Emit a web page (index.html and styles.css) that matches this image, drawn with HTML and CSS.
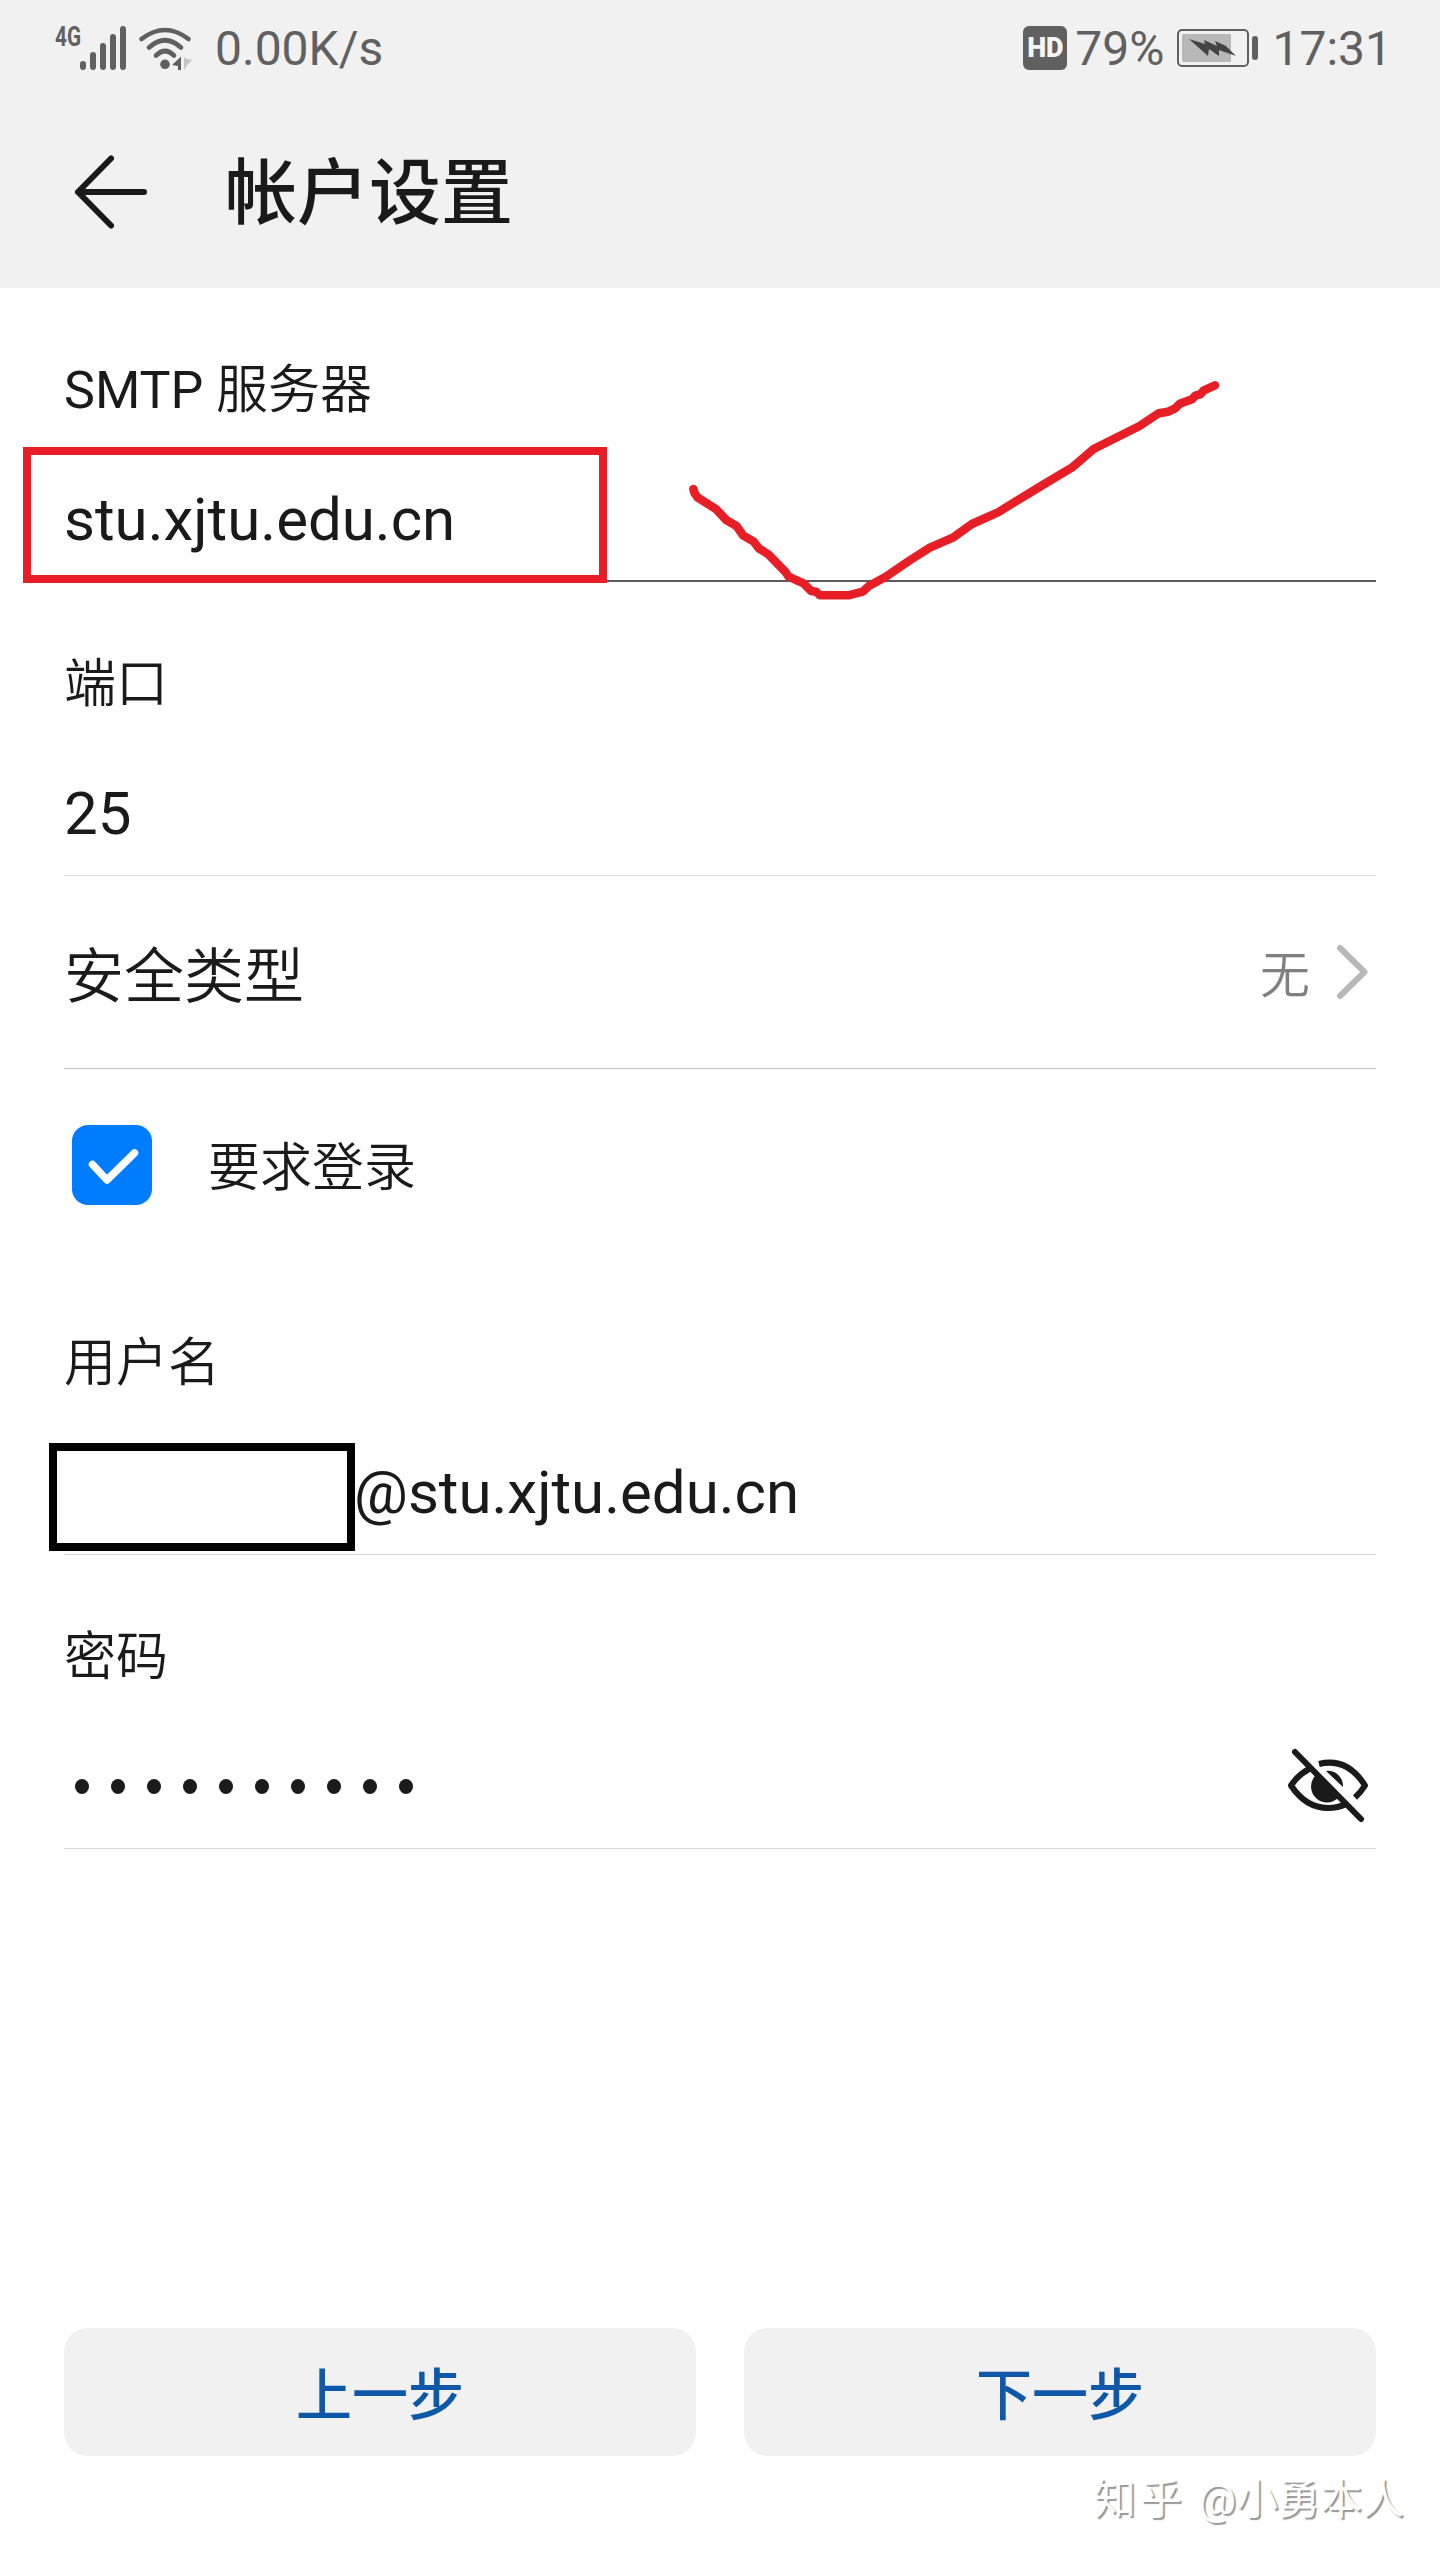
FILE: index.html
```html
<!DOCTYPE html>
<html lang="zh-CN">

<head>
    <meta charset="UTF-8">
    <meta name="viewport" content="width=device-width, initial-scale=1.0">
    <title>帐户设置</title>
    <link rel="stylesheet" href="styles.css">
</head>

<body>
    <div class="screen">
        <header class="header">
            <div class="status-bar">
                <svg class="signal" width="138" height="64" viewBox="0 -8 138 64">
                    <text class="net-type" x="-1" y="21.500" textLength="26" lengthAdjust="spacingAndGlyphs">4G</text>
                    <g fill="#606060">
                        <rect x="24" y="37" width="6" height="9" rx="3" />
                        <rect x="34" y="28" width="6" height="18" rx="3" />
                        <rect x="44" y="19" width="6" height="27" rx="3" />
                        <rect x="54" y="10" width="6" height="36" rx="3" />
                        <rect x="64" y="2" width="6" height="44" rx="3" />
                        <circle cx="109" cy="40.3" r="4.8" />
                        <path d="M116 41l9-8.500v13.500h-3v-4z" />
                    </g>
                    <path d="M128 33v13l3-5 5-5-5-1z" fill="#c4c4c4" />
                    <g fill="none" stroke="#606060" stroke-width="4.600" stroke-linecap="round">
                        <path d="M85.500 15Q109 -3 132.500 15" />
                        <path d="M93 23.500Q109 9 125 23.500" />
                        <path d="M100 31.500Q109 22.500 118 31.500" />
                    </g>
                </svg>
                <span class="speed">0.00K/s</span>
                <span class="hd">HD</span>
                <span class="percent">79%</span>
                <svg class="battery" width="84" height="40" viewBox="0 0 84 40">
                    <rect x="2" y="2" width="70" height="36" rx="4" fill="none" stroke="#606060" stroke-width="2" />
                    <rect x="6" y="6" width="49" height="28" rx="1" fill="#b8b8b8" />
                    <path d="M13 11l16 5-1-4 13 6-2-5 11 5 10 10-17-6 0 6-10-7-1 7z" fill="#444" />
                    <rect x="76" y="8" width="6" height="24" rx="3" fill="#606060" />
                </svg>
                <span class="time">17:31</span>
            </div>
            <div class="title-bar">
                <svg class="back" width="76" height="76" viewBox="0 0 76 76">
                    <path d="M39 4.500L6 38l33 33.500M6 38h66" fill="none" stroke="#1a1a1a" stroke-width="6" stroke-linecap="round" stroke-linejoin="round" />
                </svg>
                <h1>帐户设置</h1>
            </div>
        </header>

        <form class="form">
            <div class="field active">
                <label><span class="latin">SMTP</span> 服务器</label>
                <div class="value">stu.xjtu.edu.cn</div>
                <div class="red-box"></div>
                <svg class="tick" width="560" height="240" viewBox="680 370 560 240">
                    <polyline points="693.3,489 694.5,493 697.5,497.300 716.3,509.300 726.2,520 736.5,526 743,535.300 753.8,541.700 758.7,548.300 768.3,554.300 785.5,572 788.6,576.700 803.5,583.300 811,591 816,591.700 820,595.300 848.3,595.300 862.8,591.700 869.3,585.700 885.8,576.700 908.8,561 929.8,547.700 952.8,537.700 971.9,524 998,512.300 1042.7,485 1071.8,467.700 1093.6,449 1139.5,426 1158.7,413.300 1168.2,411.700 1174.7,408.700 1179.7,403.700 1192,399.300 1195.8,395.300 1200.4,394.300 1203.4,390.700 1215,385.300" fill="none" stroke="#e81e26" stroke-width="8.500" stroke-linecap="round" stroke-linejoin="round" />
                </svg>
            </div>
            <div class="field">
                <label>端口</label>
                <div class="value">25</div>
            </div>
            <div class="select-row">
                <span class="select-label">安全类型</span>
                <span class="select-value">无</span>
                <svg class="chevron" width="32" height="56" viewBox="0 0 32 56">
                    <path d="M4 4l24.500 24L4 52" fill="none" stroke="#b8b8b8" stroke-width="6" stroke-linecap="round" stroke-linejoin="round" />
                </svg>
            </div>
            <div class="check-row">
                <span class="checkbox">
                    <svg width="80" height="80" viewBox="0 0 80 80">
                        <path d="M20.500 39.500L35 55l27.500-27" fill="none" stroke="#fff" stroke-width="7.500" stroke-linecap="round" stroke-linejoin="round" />
                    </svg>
                </span>
                <span class="check-label">要求登录</span>
            </div>
            <div class="field">
                <label>用户名</label>
                <div class="value user">@stu.xjtu.edu.cn</div>
                <div class="black-box"></div>
            </div>
            <div class="field">
                <label>密码</label>
                <div class="value password">
                    <span class="dots"><i></i><i></i><i></i><i></i><i></i><i></i><i></i><i></i><i></i><i></i></span>
                    <svg class="eye" width="84" height="76" viewBox="0 0 84 76">
                        <g fill="none" stroke="#1a1a1a" stroke-width="6">
                            <path d="M23 21Q12 27 5 37.500Q20 60 42 60Q52 60 60 56" stroke-linejoin="round" />
                            <path d="M33 16Q61 9 79 37.500Q75 44 69 49.500" stroke-linejoin="round" />
                            <path d="M9 4l66 67" stroke-linecap="round" />
                        </g>
                        <path d="M29 28A15 15 0 1 0 53 49zM40 23A15 15 0 0 1 57 39z" fill="#1a1a1a" />
                    </svg>
                </div>
            </div>
        </form>

        <div class="buttons">
            <button type="button">上一步</button>
            <button type="button">下一步</button>
        </div>
        <div class="watermark"><span class="site">知乎</span> @小勇本人</div>
    </div>
</body>

</html>
```

FILE: styles.css
```css
* {
    box-sizing: border-box;
}

body {
    margin: 0;
    background-color: #fefefe;
    color: #1a1a1a;
    font-family: Roboto, "Noto Sans CJK SC", sans-serif;
}

.screen {
    display: flex;
    flex-direction: column;
    width: 1440px;
    height: 2560px;
    overflow: hidden;
}

.header {
    height: 288px;
    background-color: #f1f1f1;
}

.status-bar {
    display: flex;
    align-items: center;
    height: 96px;
    padding: 0 48px 0 56px;
    color: #606060;
    font-size: 48px;
    line-height: 66px;
}

.signal {
    overflow: visible;
}

.speed {
    margin-left: 21px;
    margin-right: auto;
}

.speed,
.percent,
.time {
    padding-top: 2px;
}

.net-type {
    fill: #606060;
    font-size: 28px;
    font-weight: 700;
}

.hd {
    width: 44px;
    height: 44px;
    border-radius: 6px;
    background-color: #606060;
    color: #f5f5f5;
    font-size: 27px;
    font-weight: 900;
    line-height: 45px;
    text-align: center;
}

.percent {
    margin-left: 8px;
}

.battery {
    margin-left: 12px;
    margin-right: 12px;
}

.title-bar {
    display: flex;
    align-items: center;
    height: 192px;
    padding-left: 72px;
}

.title-bar h1 {
    margin: 4px 0 0 77px;
    font-size: 72px;
    font-weight: 500;
    line-height: 80px;
}

.form {
    padding: 0 64px;
}

.field {
    position: relative;
    height: 294px;
    padding-top: 73px;
    border-bottom: 1px solid #d9d9d9;
}

.field.active {
    border-bottom: 2px solid #5b5b5b;
}

.field label {
    display: block;
    font-size: 52px;
    font-weight: 350;
    line-height: 60px;
}

.field .latin {
    font-weight: 400;
}

.value {
    margin-top: 69px;
    font-size: 60px;
    line-height: 60px;
}

/* marks drawn over the form */
.red-box {
    position: absolute;
    left: -41px;
    top: 159px;
    width: 584px;
    height: 136px;
    border: 8px solid #e81e26;
}

.tick {
    position: absolute;
    left: 616px;
    top: 82px;
}

.black-box {
    position: absolute;
    left: -15px;
    top: 182px;
    width: 306px;
    height: 108px;
    border: 8px solid #000;
}

.select-row {
    display: flex;
    align-items: center;
    height: 193px;
    padding-right: 8px;
    border-bottom: 1px solid #c4c4c4;
}

.select-label {
    flex: 1;
    padding-top: 12px;
    font-size: 60px;
    font-weight: 350;
    line-height: 64px;
}

.select-value {
    padding-top: 8px;
    color: #808080;
    font-size: 50px;
    font-weight: 350;
    line-height: 60px;
}

.chevron {
    margin-left: 26px;
}

.check-row {
    display: flex;
    align-items: center;
    height: 192px;
    padding-left: 8px;
}

.checkbox {
    width: 80px;
    height: 80px;
    border-radius: 16px;
    background-color: #007dff;
}

.check-label {
    margin-left: 56px;
    padding-top: 8px;
    font-size: 52px;
    font-weight: 350;
    line-height: 60px;
}

.user {
    padding-left: 290px;
}

.password {
    display: flex;
    align-items: center;
    justify-content: space-between;
    height: 58px;
    padding: 0 6px 0 11px;
}

.dots {
    display: flex;
    gap: 22px;
}

.dots i {
    width: 14px;
    height: 15px;
    border-radius: 50%;
    background-color: #1a1a1a;
}

.buttons {
    display: flex;
    gap: 48px;
    margin-top: auto;
    padding: 0 64px;
}

.buttons button {
    flex: 1;
    height: 128px;
    padding: 0 0 3px;
    border: none;
    border-radius: 24px;
    background-color: #f1f1f1;
    color: #0f58a8;
    font-family: inherit;
    font-size: 56px;
    font-weight: 500;
}

.watermark {
    height: 104px;
    padding: 16px 36px 0 0;
    color: #fff;
    font-size: 42px;
    line-height: 56px;
    text-align: right;
    text-shadow: 2px 2px 1px rgba(0, 0, 0, 0.4);
}

.site {
    margin-right: 2px;
    letter-spacing: 4px;
}
```
